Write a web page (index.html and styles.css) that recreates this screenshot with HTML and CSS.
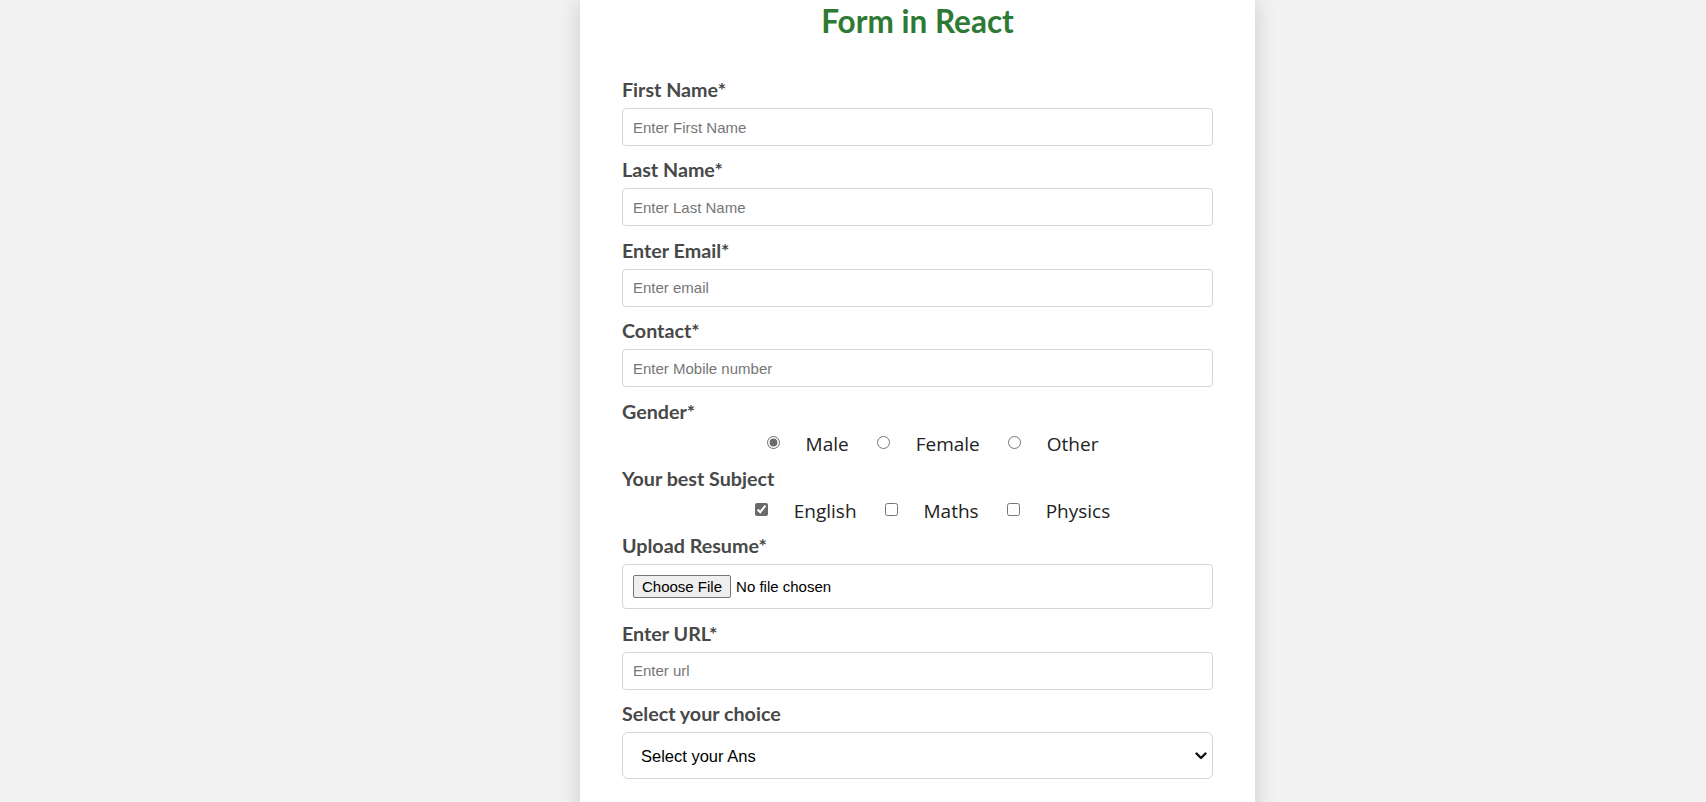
FILE: index.html
```html
<!DOCTYPE html>
<html lang="en">
<head>
<meta charset="utf-8">
<title>Form in React</title>
<link rel="stylesheet" href="styles.css">
</head>
<body>
<div class="page">
  <div class="card">
    <h1 class="title">Form in React</h1>
    <form class="form">
      <div class="field">
        <label class="label" for="fn">First Name*</label>
        <input class="text-input" id="fn" type="text" placeholder="Enter First Name">
      </div>
      <div class="field">
        <label class="label" for="ln">Last Name*</label>
        <input class="text-input" id="ln" type="text" placeholder="Enter Last Name">
      </div>
      <div class="field">
        <label class="label" for="em">Enter Email*</label>
        <input class="text-input" id="em" type="email" placeholder="Enter email">
      </div>
      <div class="field">
        <label class="label" for="ct">Contact*</label>
        <input class="text-input" id="ct" type="tel" placeholder="Enter Mobile number">
      </div>
      <div class="field field-choice">
        <span class="label">Gender*</span>
        <div class="choice-row">
          <input class="choice" type="radio" name="gender" id="g1" checked>
          <label class="choice-label" for="g1">Male</label>
          <input class="choice" type="radio" name="gender" id="g2">
          <label class="choice-label" for="g2">Female</label>
          <input class="choice" type="radio" name="gender" id="g3">
          <label class="choice-label" for="g3">Other</label>
        </div>
      </div>
      <div class="field field-choice">
        <span class="label">Your best Subject</span>
        <div class="choice-row">
          <input class="choice" type="checkbox" id="s1" checked>
          <label class="choice-label" for="s1">English</label>
          <input class="choice" type="checkbox" id="s2">
          <label class="choice-label" for="s2">Maths</label>
          <input class="choice" type="checkbox" id="s3">
          <label class="choice-label" for="s3">Physics</label>
        </div>
      </div>
      <div class="field">
        <label class="label" for="rs">Upload Resume*</label>
        <div class="file-box">
          <input class="file-input" id="rs" type="file">
        </div>
      </div>
      <div class="field">
        <label class="label" for="url">Enter URL*</label>
        <input class="text-input" id="url" type="url" placeholder="Enter url">
      </div>
      <div class="field">
        <label class="label" for="sel">Select your choice</label>
        <div class="select-wrap">
          <select class="select" id="sel">
            <option>Select your Ans</option>
            <option>Beginner</option>
            <option>Intermediate</option>
            <option>Advanced</option>
          </select>
          <svg class="chevron" width="12" height="8" viewBox="0 0 12 8" aria-hidden="true"><path d="M1.5 1.5 L6 6 L10.5 1.5" fill="none" stroke="#111" stroke-width="2.4" stroke-linecap="round" stroke-linejoin="round"/></svg>
        </div>
      </div>
    </form>
  </div>
</div>
</body>
</html>
```

FILE: styles.css
```css
* { box-sizing: border-box; }

html, body {
  margin: 0;
  padding: 0;
  background: #f2f2f2;
  height: 100%;
  overflow: hidden;
}

.page {
  display: flex;
  justify-content: center;
  padding-left: 129px;
  min-height: 100%;
}

.card {
  width: 675px;
  background: #ffffff;
  box-shadow: 0 0 22px rgba(0, 0, 0, 0.16);
  padding: 3px 42px 40px 42px;
}

.title {
  margin: 0 0 39px 0;
  font-family: Lato, "Open Sans", sans-serif;
  font-weight: 700;
  font-size: 31.5px;
  line-height: 37px;
  color: #2e7a34;
  text-align: center;
}

.form {
  display: flex;
  flex-direction: column;
}

.field {
  display: flex;
  flex-direction: column;
  margin-bottom: 13.4px;
}

.field-choice {
  margin-bottom: 11.4px;
}

.label {
  display: block;
  font-family: Lato, "Open Sans", sans-serif;
  font-weight: 700;
  font-size: 19.7px;
  line-height: 22px;
  color: #484848;
  margin-bottom: 7px;
}

.field-choice .label {
  margin-bottom: 8px;
}

.text-input {
  height: 38px;
  width: 100%;
  border: 1px solid #d5d5d5;
  border-radius: 4px;
  padding: 0 10px;
  font-family: "Liberation Sans", Arial, sans-serif;
  font-size: 15px;
  color: #222;
  background: #fff;
  outline: none;
}

.text-input::placeholder {
  color: #767676;
}

.choice-row {
  display: flex;
  align-items: center;
  justify-content: center;
  padding-left: 30px;
  height: 26px;
}

.choice {
  margin: 0;
  width: 13px;
  height: 13px;
  accent-color: #6a6a6a;
  position: relative;
  top: -1px;
}

.choice-label {
  font-family: "Open Sans", sans-serif;
  font-size: 19px;
  line-height: 26px;
  color: #222;
  margin-left: 26px;
  margin-right: 28px;
}

.choice-label:last-child {
  margin-right: 0;
}

.file-box {
  height: 45px;
  border: 1px solid #d5d5d5;
  border-radius: 4px;
  padding: 0 10px;
  display: flex;
  align-items: center;
}

.file-input {
  font-family: "Liberation Sans", Arial, sans-serif;
  font-size: 15px;
  color: #000;
}

.file-input::file-selector-button {
  font-family: "Liberation Sans", Arial, sans-serif;
  font-size: 15px;
  color: #000;
  background: #efefef;
  border: 1px solid #767676;
  border-radius: 2px;
  padding: 1px 8px;
  height: 23px;
  margin-right: 5px;
}

.select-wrap {
  position: relative;
}

.select {
  appearance: none;
  -webkit-appearance: none;
  width: 100%;
  height: 47px;
  border: 1px solid #d5d5d5;
  border-radius: 6px;
  padding: 0 18px;
  font-family: "Liberation Sans", Arial, sans-serif;
  font-size: 16.5px;
  color: #000;
  background: #fff;
  outline: none;
}

.chevron {
  position: absolute;
  right: 6px;
  top: 20px;
  pointer-events: none;
}
```
